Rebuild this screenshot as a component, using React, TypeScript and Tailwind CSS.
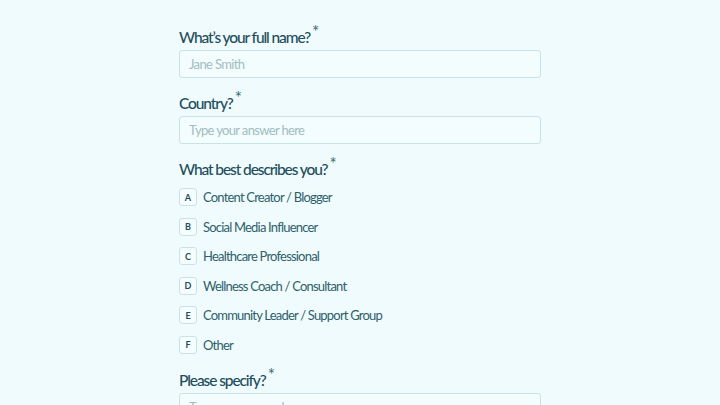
const options = [
  { key: 'A', label: 'Content Creator / Blogger' },
  { key: 'B', label: 'Social Media Influencer' },
  { key: 'C', label: 'Healthcare Professional' },
  { key: 'D', label: 'Wellness Coach / Consultant' },
  { key: 'E', label: 'Community Leader / Support Group' },
  { key: 'F', label: 'Other' },
];

function Label({ text }: { text: string }) {
  return (
    <label className="flex items-start text-[15.5px] leading-[20px] font-medium tracking-[-1.1px] text-[#1e4e5d]">
      {text}
      <span className="ml-[2px] -mt-[5px] text-[17px] leading-[20px] font-normal tracking-normal text-[#3f6a75]">*</span>
    </label>
  );
}

function TextInput({ placeholder }: { placeholder: string }) {
  return (
    <input
      placeholder={placeholder}
      className="mt-[3px] block h-[28px] w-full rounded-[3px] border border-[#c9e2e5] bg-[#f3fdfe] px-[9px] text-[13px] tracking-[-0.65px] text-[#1e4e5d] placeholder:text-[#a2bcc0] outline-none"
    />
  );
}

export default function App() {
  return (
    <div className="min-h-screen bg-[#effbfc] font-['Lato','Liberation_Sans',sans-serif]">
      <div className="mx-auto w-[362px] pt-[27px]">
        <Label text="What’s your full name?" />
        <TextInput placeholder="Jane Smith" />

        <div className="mt-[15px]">
          <Label text="Country?" />
          <TextInput placeholder="Type your answer here" />
        </div>

        <div className="mt-[15px]">
          <Label text="What best describes you?" />
          <div className="mt-[9px] flex flex-col gap-[11.6px]">
            {options.map((o) => (
              <div key={o.key} className="flex h-[18px] items-center gap-[6px]">
                <span className="flex h-[18px] w-[18px] items-center justify-center rounded-[3px] border border-[#c9e2e5] bg-[#f5fdfe] text-[9px] leading-none font-bold text-[#1e4e5d]">
                  {o.key}
                </span>
                <span className="text-[13px] leading-[18px] tracking-[-0.8px] text-[#2f5f6b]">{o.label}</span>
              </div>
            ))}
          </div>
        </div>

        <div className="mt-[16px]">
          <Label text="Please specify?" />
          <TextInput placeholder="Type your answer here" />
        </div>
      </div>
    </div>
  );
}
